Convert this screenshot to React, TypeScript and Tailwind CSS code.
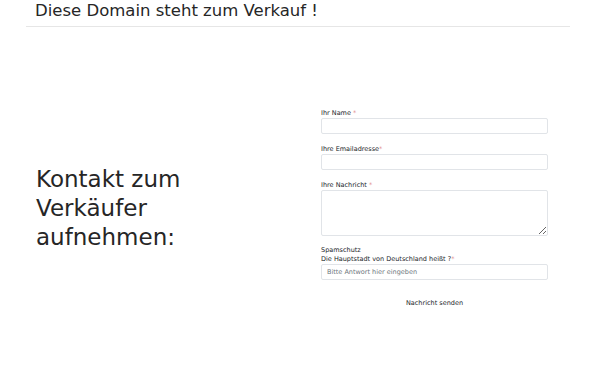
import React from 'react';

const Label = ({ children, req }: { children: React.ReactNode; req?: boolean }) => (
  <label className="block text-[6.5px] leading-[9px] text-[#212529]">
    {children}
    {req && <span className="text-[#e08a8a]">*</span>}
  </label>
);

const App = () => {
  return (
    <div
      className="w-[600px] h-[375px] bg-white text-[#212529] overflow-hidden"
      style={{ fontFamily: '"DejaVu Sans", Verdana, sans-serif' }}
    >
      <div className="ml-[26px] mr-[30px]">
        {/* Header */}
        <div className="h-[27px] border-b border-[#e6e6e6] pl-[9px] pt-[1px]">
          <h1 className="text-[16.5px] leading-[19px] text-[#262626]">Diese Domain steht zum Verkauf !</h1>
        </div>

        {/* Main */}
        <div className="grid grid-cols-2 items-center pt-[82px]">
          <div className="pl-[10px]">
            <h2 className="text-[23px] leading-[29px] text-[#262626]">
              Kontakt zum
              <br />
              Verkäufer
              <br />
              aufnehmen:
            </h2>
          </div>

          <form className="pl-[23px] pr-[22px]">
            <div className="mb-[11px]">
              <Label req>Ihr Name </Label>
              <input className="block w-full h-[16px] border border-[#e1e4e8] rounded-[2px] outline-none" />
            </div>
            <div className="mb-[11px]">
              <Label req>Ihre Emailadresse</Label>
              <input className="block w-full h-[16px] border border-[#e1e4e8] rounded-[2px] outline-none" />
            </div>
            <div className="mb-[10px]">
              <Label req>Ihre Nachricht </Label>
              <textarea className="block w-full h-[46px] border border-[#e1e4e8] rounded-[2px] outline-none" />
            </div>
            <div className="mb-[19px]">
              <Label>Spamschutz</Label>
              <Label req>Die Hauptstadt von Deutschland heißt ?</Label>
              <input
                placeholder="Bitte Antwort hier eingeben"
                className="block w-full h-[16px] border border-[#e1e4e8] rounded-[2px] px-[5px] text-[6.5px] outline-none placeholder:text-[#6c757d]"
              />
            </div>
            <div className="text-center text-[6.5px] leading-[9px] text-[#212529]">
              Nachricht senden
            </div>
          </form>
        </div>
      </div>
    </div>
  );
};

export default App;
